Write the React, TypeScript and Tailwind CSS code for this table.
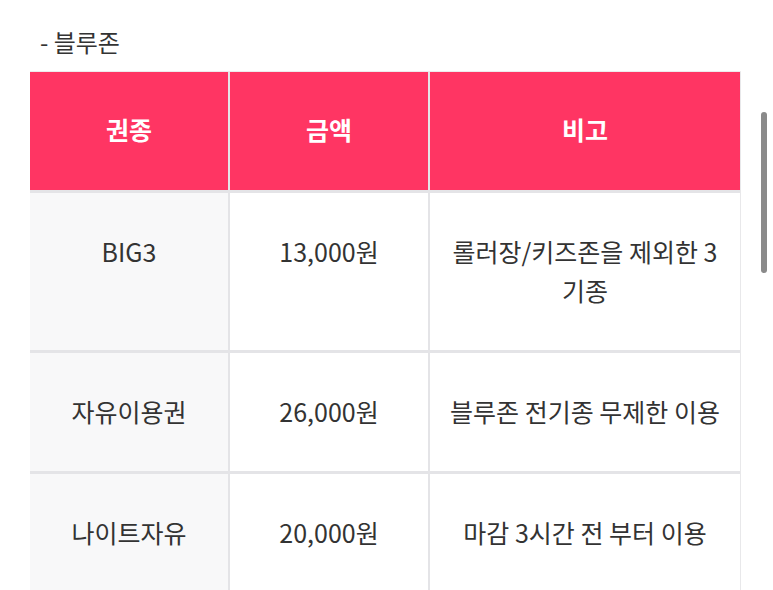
// 요금표: 블루존 권종/금액/비고
import React from 'react';

interface FareRow {
  kind: string;
  price: string;
  note: React.ReactNode;
  height: string;
}

const ROWS: FareRow[] = [
  {
    kind: 'BIG3',
    price: '13,000원',
    note: (
      <>
        롤러장/키즈존을 제외한 3
        <br />
        기종
      </>
    ),
    height: 'h-[157px]',
  },
  { kind: '자유이용권', price: '26,000원', note: '블루존 전기종 무제한 이용', height: 'h-[118px]' },
  { kind: '나이트자유', price: '20,000원', note: '마감 3시간 전 부터 이용', height: 'h-[130px]' },
];

const FONT = "font-['Noto_Sans_CJK_KR','Noto_Sans',sans-serif]";

export default function App() {
  return (
    <div className={`relative h-[590px] w-[773px] overflow-hidden bg-white ${FONT}`}>
      <div className="pl-[40px] pt-[24px] text-[24px] leading-[36px] text-[#333]">- 블루존</div>

      <div className="ml-[30px] mr-[32px] mt-[11px] border-t border-[#ececec]">
        <div className="grid grid-cols-[198px_198px_1fr] gap-x-[2px] gap-y-[3px] border-r border-[#e8e8ea] bg-[#e4e4e7]">
          {['권종', '금액', '비고'].map((h) => (
            <div
              key={h}
              className="flex h-[118px] items-start justify-center bg-[#ff3563] pt-[38px] text-[25px] font-bold leading-[39px] text-white"
            >
              {h}
            </div>
          ))}

          {ROWS.map((r) => (
            <React.Fragment key={r.kind}>
              <div className={`${r.height} bg-[#f8f8f9] pt-[39px] text-center text-[25px] leading-[39px] text-[#333]`}>
                {r.kind}
              </div>
              <div className={`${r.height} bg-white pt-[39px] text-center text-[25px] leading-[39px] text-[#333]`}>
                {r.price}
              </div>
              <div className={`${r.height} bg-white px-[6px] pt-[39px] text-center text-[25px] leading-[39px] text-[#333]`}>
                {r.note}
              </div>
            </React.Fragment>
          ))}
        </div>
      </div>

      {/* 스크롤바 */}
      <div className="absolute left-[761px] top-[112px] h-[161px] w-[6px] rounded-full bg-[#8a8a8a]" />
    </div>
  );
}
